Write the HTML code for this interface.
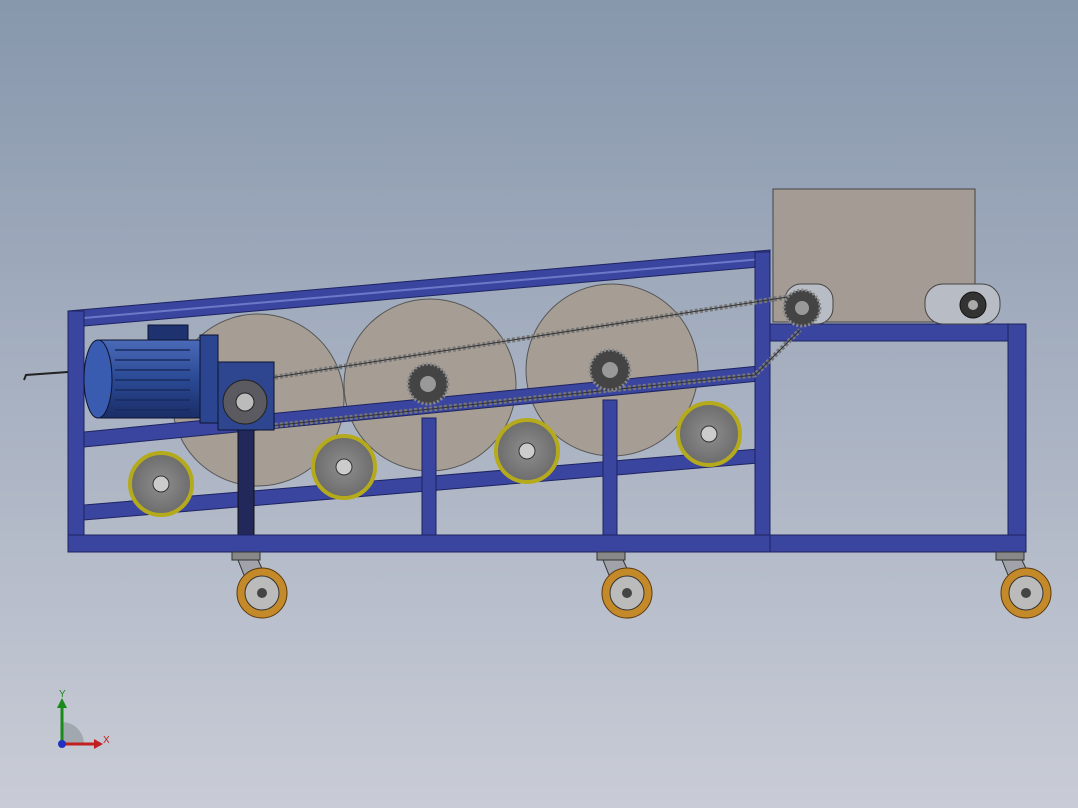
<!DOCTYPE html>
<html><head><meta charset="utf-8"><style>
html,body{margin:0;padding:0;width:1078px;height:808px;overflow:hidden}
body{background:linear-gradient(#8797ac 0%,#a5afc0 45%,#c9ccd6 100%)}
svg{position:absolute;left:0;top:0}
</style></head><body>
<svg width="1078" height="808" viewBox="0 0 1078 808">
<defs>
<radialGradient id="wh" cx="50%" cy="50%" r="50%"><stop offset="0" stop-color="#8e8e8e"/><stop offset="1" stop-color="#6c6c6c"/></radialGradient>
<linearGradient id="mot" x1="0" y1="0" x2="0" y2="1"><stop offset="0" stop-color="#4a6ab8"/><stop offset=".5" stop-color="#2b4a95"/><stop offset="1" stop-color="#1a2d66"/></linearGradient>
</defs>
<path d="M24 380 L26 375 L68 372" stroke="#222" stroke-width="2" fill="none"/>
<g fill="#a69d94" stroke="#555" stroke-width="1">
<circle cx="258" cy="400" r="86"/>
<circle cx="430" cy="385" r="86"/>
<circle cx="612" cy="370" r="86"/>
</g>
<polygon points="68,311 770,250 770,266 84,326 68,326" fill="#3a45a0" stroke="#1e2460"/>
<line x1="84" y1="318" x2="762" y2="259" stroke="#6d78c8" stroke-width="2"/>
<polygon points="84,432 770,365 770,380 84,447" fill="#3a45a0" stroke="#1e2460"/>
<polygon points="84,505 770,448 770,462 84,520" fill="#3a45a0" stroke="#1e2460"/>
<rect x="68" y="311" width="16" height="241" fill="#3a45a0" stroke="#1e2460"/>
<rect x="755" y="252" width="15" height="300" fill="#3a45a0" stroke="#1e2460"/>
<rect x="422" y="418" width="14" height="120" fill="#3a45a0" stroke="#1e2460"/>
<rect x="603" y="400" width="14" height="138" fill="#3a45a0" stroke="#1e2460"/>
<rect x="238" y="430" width="16" height="105" fill="#22285a" stroke="#111"/>
<rect x="68" y="535" width="703" height="17" fill="#3a45a0" stroke="#1e2460"/>
<rect x="770" y="324" width="256" height="17" fill="#3a45a0" stroke="#1e2460"/>
<rect x="1008" y="324" width="18" height="228" fill="#3a45a0" stroke="#1e2460"/>
<rect x="770" y="535" width="256" height="17" fill="#3a45a0" stroke="#1e2460"/>
<rect x="773" y="189" width="202" height="133" fill="#a39b94" stroke="#444"/>
<rect x="925" y="284" width="75" height="40" rx="18" fill="#b8bcc4" stroke="#444"/>
<circle cx="973" cy="305" r="13" fill="#333" stroke="#111"/>
<circle cx="973" cy="305" r="5" fill="#aaa"/>
<rect x="785" y="284" width="48" height="40" rx="16" fill="#b8bcc4" stroke="#444"/>
<g stroke="#777" stroke-width="5" fill="none" stroke-dasharray="3 2">
<path d="M270 378 L800 295"/>
<path d="M270 426 L610 390 L755 375 L800 330"/>
</g>
<g stroke="#333" stroke-width="1" fill="none">
<path d="M270 378 L800 295"/>
<path d="M270 426 L610 390 L755 375 L800 330"/>
</g>
<g><circle cx="428" cy="384" r="20" fill="#444" stroke="#888" stroke-width="3" stroke-dasharray="2 2"/><circle cx="428" cy="384" r="8" fill="#999"/></g>
<g><circle cx="610" cy="370" r="20" fill="#444" stroke="#888" stroke-width="3" stroke-dasharray="2 2"/><circle cx="610" cy="370" r="8" fill="#999"/></g>
<g><circle cx="802" cy="308" r="18" fill="#444" stroke="#888" stroke-width="3" stroke-dasharray="2 2"/><circle cx="802" cy="308" r="7" fill="#999"/></g>
<g fill="url(#wh)" stroke="#b4aa1c" stroke-width="4">
<circle cx="161" cy="484" r="31"/>
<circle cx="344" cy="467" r="31"/>
<circle cx="527" cy="451" r="31"/>
<circle cx="709" cy="434" r="31"/>
</g>
<g fill="#ccc" stroke="#333"><circle cx="161" cy="484" r="8"/><circle cx="344" cy="467" r="8"/><circle cx="527" cy="451" r="8"/><circle cx="709" cy="434" r="8"/></g>
<rect x="148" y="325" width="40" height="22" fill="#1e3270" stroke="#0c1430"/>
<rect x="95" y="340" width="110" height="78" rx="6" fill="url(#mot)" stroke="#0c1430"/>
<ellipse cx="98" cy="379" rx="14" ry="39" fill="#3a5cb0" stroke="#0c1430"/>
<g stroke="#1a2a60" stroke-width="1.5"><line x1="115" y1="350" x2="190" y2="350"/><line x1="115" y1="360" x2="190" y2="360"/><line x1="115" y1="370" x2="190" y2="370"/><line x1="115" y1="380" x2="190" y2="380"/><line x1="115" y1="390" x2="190" y2="390"/><line x1="115" y1="400" x2="190" y2="400"/><line x1="115" y1="410" x2="190" y2="410"/></g>
<rect x="200" y="335" width="18" height="88" fill="#2b4590" stroke="#0c1430"/>
<rect x="218" y="362" width="56" height="68" fill="#2d468f" stroke="#0c1430"/>
<circle cx="245" cy="402" r="22" fill="#5a5a60" stroke="#222"/>
<circle cx="245" cy="402" r="9" fill="#bbb" stroke="#222"/>
<g>
<rect x="232" y="552" width="28" height="8" fill="#888" stroke="#333"/>
<path d="M238 560 L258 560 L272 590 L250 590 Z" fill="#a0a4aa" stroke="#333"/>
<circle cx="262" cy="593" r="25" fill="#c48a2a" stroke="#5a3a10"/><circle cx="262" cy="593" r="17" fill="#bbb" stroke="#333"/><circle cx="262" cy="593" r="5" fill="#444"/>
<rect x="597" y="552" width="28" height="8" fill="#888" stroke="#333"/>
<path d="M603 560 L623 560 L637 590 L615 590 Z" fill="#a0a4aa" stroke="#333"/>
<circle cx="627" cy="593" r="25" fill="#c48a2a" stroke="#5a3a10"/><circle cx="627" cy="593" r="17" fill="#bbb" stroke="#333"/><circle cx="627" cy="593" r="5" fill="#444"/>
<rect x="996" y="552" width="28" height="8" fill="#888" stroke="#333"/>
<path d="M1002 560 L1022 560 L1036 590 L1014 590 Z" fill="#a0a4aa" stroke="#333"/>
<circle cx="1026" cy="593" r="25" fill="#c48a2a" stroke="#5a3a10"/><circle cx="1026" cy="593" r="17" fill="#bbb" stroke="#333"/><circle cx="1026" cy="593" r="5" fill="#444"/>
</g>
<path d="M62 744 L62 722 A22 22 0 0 1 84 744 Z" fill="#9aa0a8" opacity=".8"/>
<line x1="62" y1="744" x2="62" y2="706" stroke="#1a8a1a" stroke-width="3"/>
<polygon points="57,708 67,708 62,698" fill="#1a8a1a"/>
<line x1="62" y1="744" x2="96" y2="744" stroke="#c02020" stroke-width="3"/>
<polygon points="94,739 94,749 103,744" fill="#c02020"/>
<circle cx="62" cy="744" r="4" fill="#2030c0"/>
<text x="59" y="697" font-family="Liberation Sans, sans-serif" font-size="10" fill="#1a8a1a">Y</text>
<text x="103" y="743" font-family="Liberation Sans, sans-serif" font-size="10" fill="#c02020">X</text>
</svg>
</body></html>
